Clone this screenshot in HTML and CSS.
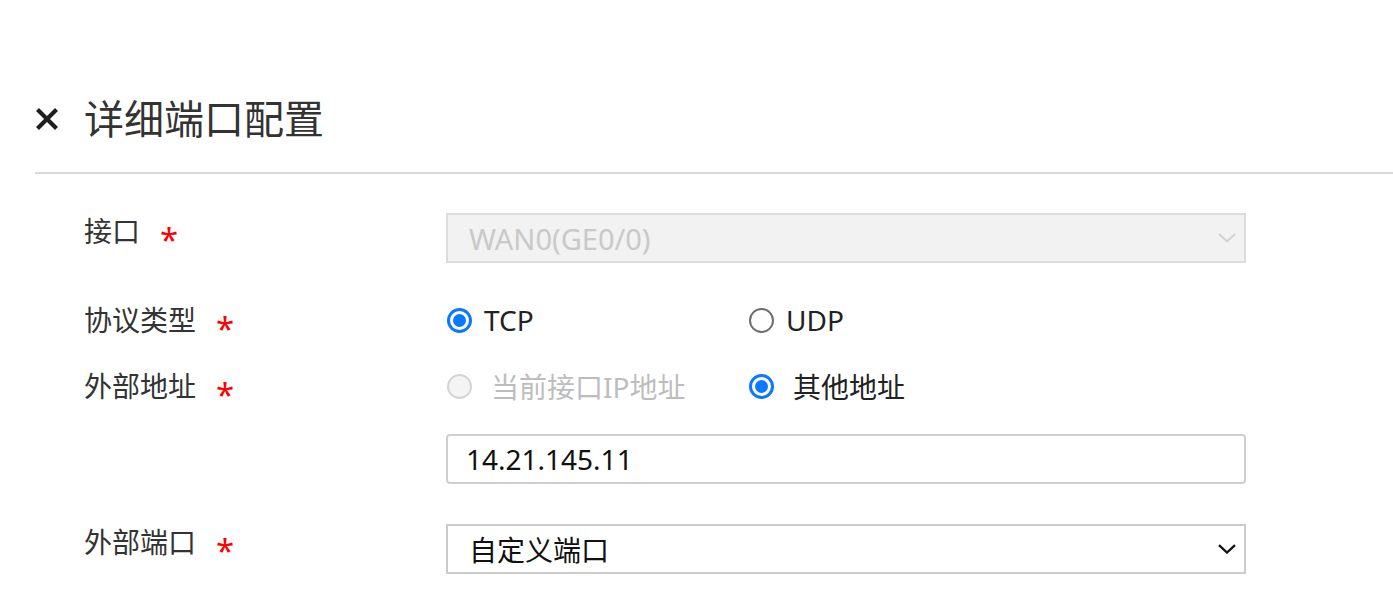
FILE: index.html
```html
<!DOCTYPE html>
<html lang="zh-CN">
<head>
<meta charset="utf-8">
<title>详细端口配置</title>
<link rel="stylesheet" href="styles.css">
</head>
<body>
<div class="panel">
  <div class="header">
    <span class="close" aria-label="关闭">
      <svg width="24" height="24" viewBox="0 0 24 24"><path d="M2.5 2.5 L21.5 21.5 M21.5 2.5 L2.5 21.5" stroke="#1e1e1e" stroke-width="4.2" stroke-linecap="butt" fill="none"/></svg>
    </span>
    <h1 class="title">详细端口配置</h1>
  </div>
  <div class="divider"></div>

  <form class="form">
    <div class="row row-first">
      <div class="label"><span class="label-text">接口</span><span class="req">*</span></div>
      <div class="select select-disabled">
        <span class="select-text">WAN0(GE0/0)</span>
        <svg class="chev" width="18" height="10" viewBox="0 0 18 10"><path d="M1 1 L9 8.5 L17 1" stroke="#d2d2d2" stroke-width="2" fill="none"/></svg>
      </div>
    </div>

    <div class="row row-radio row-gap-proto">
      <div class="label label-mid"><span class="label-text">协议类型</span><span class="req">*</span></div>
      <div class="options">
        <div class="option"><span class="radio radio-on"></span><span class="opt-text">TCP</span></div>
        <div class="option"><span class="radio"></span><span class="opt-text">UDP</span></div>
      </div>
    </div>

    <div class="row row-radio row-gap">
      <div class="label label-mid"><span class="label-text">外部地址</span><span class="req">*</span></div>
      <div class="options">
        <div class="option"><span class="radio radio-disabled"></span><span class="opt-text opt-wide opt-disabled">当前接口IP地址</span></div>
        <div class="option"><span class="radio radio-on"></span><span class="opt-text opt-wide">其他地址</span></div>
      </div>
    </div>

    <div class="row row-gap">
      <div class="label"></div>
      <input class="text-input" type="text" value="14.21.145.11">
    </div>

    <div class="row row-gap-lg">
      <div class="label"><span class="label-text">外部端口</span><span class="req">*</span></div>
      <div class="select">
        <span class="select-text select-text-dark">自定义端口</span>
        <svg class="chev" width="18" height="10" viewBox="0 0 18 10"><path d="M1 1.2 L9 8.5 L17 1.2" stroke="#111" stroke-width="2.3" fill="none"/></svg>
      </div>
    </div>
  </form>
</div>
</body>
</html>
```

FILE: styles.css
```css
* { box-sizing: border-box; }

html, body {
  margin: 0;
  padding: 0;
  background: #ffffff;
}

body {
  font-family: "Noto Sans", "Noto Sans CJK SC", sans-serif;
  color: #333333;
}

.panel {
  width: 1393px;
  overflow: hidden;
}

.header {
  display: flex;
  align-items: center;
  padding: 95px 0 0 35px;
  height: 143px;
}

.close {
  display: flex;
  width: 24px;
  height: 24px;
  margin-right: 25px;
}

.title {
  margin: 0;
  font-size: 40px;
  line-height: 48px;
  font-weight: 400;
  color: #333333;
}

.divider {
  margin: 29px 0 0 35px;
  height: 2px;
  background: #d9d9d9;
}

.form {
  padding-left: 84px;
}

.row {
  display: flex;
  align-items: flex-start;
}

.row-first { margin-top: 39px; }
.row-gap-proto { margin-top: 39px; }
.row-gap { margin-top: 30px; }
.row-gap-lg { margin-top: 40px; }

.label {
  width: 362px;
  flex: none;
  display: flex;
  align-items: center;
  font-size: 28px;
  line-height: 36px;
  height: 36px;
  color: #333333;
}

.req {
  color: #ff0000;
  margin-left: 20px;
  font-size: 33px;
  transform: translateY(9px);
}

.select {
  width: 800px;
  height: 50px;
  border: 2px solid #cccccc;
  background: #ffffff;
  display: flex;
  align-items: center;
  justify-content: space-between;
  padding: 0 8px 0 21px;
}

.select-disabled {
  background: #f2f2f2;
  border-color: #dcdcdc;
}

.select-text {
  font-size: 29px;
  color: #c9c9c9;
}

.select-text-dark {
  color: #111111;
  font-size: 28px;
}

.chev { display: block; }

.row-radio .label { height: 36px; }

.options {
  display: flex;
  height: 36px;
  align-items: center;
}

.option {
  width: 302px;
  display: flex;
  align-items: center;
}

.radio {
  width: 25px;
  height: 25px;
  border-radius: 50%;
  border: 2px solid #6e6e6e;
  background: #ffffff;
  flex: none;
  display: flex;
  align-items: center;
  justify-content: center;
  margin-left: 1px;
}

.radio-on {
  border: 3px solid #0a78ff;
}

.radio-on::after {
  content: "";
  width: 13px;
  height: 13px;
  border-radius: 50%;
  background: #0a78ff;
}

.radio-disabled {
  border-color: #d4d4d4;
  background: #f4f4f4;
}

.opt-text {
  margin-left: 12px;
  font-size: 28px;
  color: #222222;
}

.opt-wide { margin-left: 19px; }

.opt-disabled { color: #bdbdbd; }

.text-input {
  width: 800px;
  height: 50px;
  border: 2px solid #cfcfcf;
  border-radius: 4px;
  padding: 0 18px;
  font-family: "Noto Sans", "Noto Sans CJK SC", sans-serif;
  font-size: 28px;
  color: #111111;
  background: #ffffff;
  outline: none;
}
```
